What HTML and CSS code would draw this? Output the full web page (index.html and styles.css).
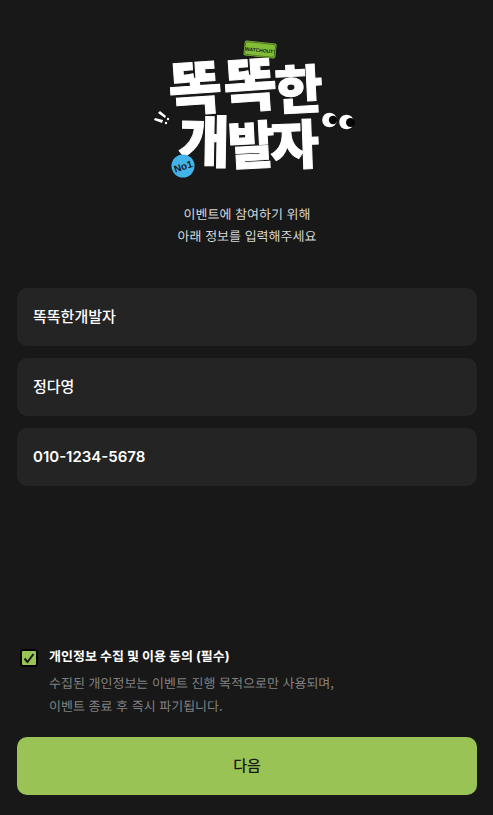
FILE: index.html
```html
<!DOCTYPE html>
<html lang="ko">
<head>
    <meta charset="UTF-8">
    <meta name="viewport" content="width=device-width, initial-scale=1.0">
    <title>똑똑한개발자 이벤트</title>
    <link rel="stylesheet" href="styles.css">
</head>
<body>
    <form class="page">
        <header class="header">
            <svg class="logo" viewBox="0 0 202 140" role="img" aria-label="똑똑한 개발자">
                <g class="logo-text">
                    <text x="16" y="71" font-size="58" transform="rotate(-4 16 71)">똑</text>
                    <text x="71" y="68" font-size="58" transform="rotate(-4 71 68)">똑</text>
                    <text x="122" y="70" font-size="52" transform="rotate(-3 122 70)">한</text>
                    <text x="24" y="122" font-size="56" transform="rotate(1 24 122)">개</text>
                    <text x="75" y="125" font-size="51" transform="rotate(-3 75 125)">발</text>
                    <text x="117" y="125" font-size="53" transform="rotate(-2 117 125)">자</text>
                </g>
                <g transform="rotate(6 106 10)">
                    <rect x="90" y="2" width="32" height="15" rx="2" fill="#83bd37"/>
                    <rect x="91" y="3" width="30" height="13" rx="2" fill="none" stroke="#4f7324" stroke-width="1"/>
                    <text class="logo-tag" x="106" y="12">WATCHOUT!</text>
                </g>
                <circle cx="29" cy="126" r="11.5" fill="#42b4e9"/>
                <text class="logo-no" x="29" y="130" transform="rotate(-18 29 126)">No1</text>
                <g fill="#fff">
                    <path d="M4 73l2-2 6 5-1 2z"/>
                    <path d="M0 80l1-2 8 2-1 3z"/>
                    <circle cx="14" cy="79" r="1.2"/>
                    <circle cx="12" cy="83" r="1.2"/>
                </g>
                <circle cx="175.5" cy="80" r="7.3" fill="#fff"/>
                <circle cx="179" cy="80" r="4.2" fill="#080506"/>
                <circle cx="192.5" cy="82" r="7.3" fill="#fff"/>
                <circle cx="196.5" cy="82.5" r="4.5" fill="#080506"/>
            </svg>
            <p class="guide">이벤트에 참여하기 위해<br>아래 정보를 입력해주세요</p>
        </header>

        <div class="fields">
            <input class="field" type="text" name="company" aria-label="회사명" value="똑똑한개발자">
            <input class="field" type="text" name="name" aria-label="이름" value="정다영">
            <input class="field field-phone" type="tel" name="phone" aria-label="전화번호" value="010-1234-5678">
        </div>

        <div class="agree">
            <input class="agree-check" type="checkbox" id="agree" name="agree" aria-describedby="agree-desc" checked required>
            <div>
                <label class="agree-label" for="agree">개인정보 수집 및 이용 동의 (필수)</label>
                <p class="agree-desc" id="agree-desc">수집된 개인정보는 이벤트 진행 목적으로만 사용되며,<br>이벤트 종료 후 즉시 파기됩니다.</p>
            </div>
        </div>
        <button class="next" type="submit">다음</button>
    </form>
</body>
</html>
```

FILE: styles.css
```css
* {
    box-sizing: border-box;
}
body {
    margin: 0;
    background-color: #181818;
    color: #fff;
    font-family: "Noto Sans CJK KR", sans-serif;
    font-size: 13px;
    text-rendering: geometricPrecision;
}
p {
    margin: 0;
}
.page {
    display: flex;
    flex-direction: column;
    min-height: 100vh;
    padding: 40px 16px 20px 17px;
}
.header {
    display: flex;
    flex-direction: column;
    align-items: center;
    gap: 23px;
}
.logo {
    display: block;
    width: 202px;
    height: 140px;
    margin-left: 16px;
    overflow: visible;
}
.logo-text {
    fill: #fff;
    font-family: "Noto Sans CJK KR", sans-serif;
    font-weight: 900;
    stroke: #fff;
    stroke-width: 1px;
}
.logo-tag,
.logo-no {
    fill: #181818;
    font-family: "Liberation Sans", sans-serif;
    font-weight: 700;
    text-anchor: middle;
}
.logo-tag {
    font-size: 5px;
}
.logo-no {
    font-size: 10px;
}
.guide {
    color: #d6d6d6;
    line-height: 22px;
    text-align: center;
}
.fields {
    display: flex;
    flex-direction: column;
    gap: 12px;
    margin-top: 41px;
}
.field {
    width: 100%;
    height: 58px;
    padding: 0 16px 4px;
    border: none;
    border-radius: 10px;
    background-color: #242424;
    color: #fff;
    font-family: inherit;
    font-size: 15px;
    font-weight: 500;
}
.field-phone {
    padding-bottom: 2px;
    font-family: Inter, sans-serif;
    font-weight: 600;
}
.agree {
    display: flex;
    align-items: flex-start;
    gap: 11px;
    margin-top: auto;
    padding-left: 3px;
}
.agree-check {
    appearance: none;
    width: 18px;
    height: 18px;
    margin: 4px 0 0;
    border: 2px solid #000;
    border-radius: 3px;
    background-color: #181818;
}
.agree-check:checked {
    background: #99c455 url("data:image/svg+xml,%3Csvg xmlns='http://www.w3.org/2000/svg' viewBox='0 0 14 14'%3E%3Cpath d='M2.5 7.5l3 3.5 6-8' fill='none' stroke='%23181818' stroke-width='2'/%3E%3C/svg%3E") center / 14px 14px no-repeat;
}
.agree-label {
    display: block;
    font-family: Inter, "Noto Sans CJK KR", sans-serif;
    font-weight: 700;
    line-height: 24px;
}
.agree-desc {
    margin-top: 2px;
    color: #808080;
    line-height: 23px;
}
.next {
    height: 58px;
    margin-top: 20px;
    padding: 0 16px 4px;
    border: none;
    border-radius: 10px;
    background-color: #99c455;
    color: #181818;
    font-family: inherit;
    font-size: 15px;
    font-weight: 500;
    cursor: pointer;
}
```
